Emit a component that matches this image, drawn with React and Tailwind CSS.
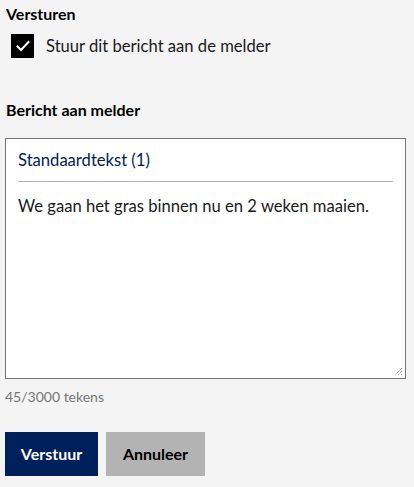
export default function App() {
  return (
    <div className="min-h-[487px] w-[414px] bg-[#f4f4f4] pl-[5px] pr-[8px] text-black" style={{ fontFamily: "Lato, 'Noto Sans', sans-serif" }}>
      <div className="pt-[4px] text-[16px] font-bold leading-[20px] pl-[1px]">Versturen</div>
      <label className="mt-[10px] flex items-center gap-[12px] pl-[6px]">
        <span className="flex h-[24px] w-[23px] items-center justify-center bg-black">
          <svg width="14" height="12" viewBox="0 0 14 12" fill="none">
            <path d="M1.5 6.5 L5 10 L12.5 2" stroke="white" strokeWidth="2" strokeLinecap="square" />
          </svg>
        </span>
        <span className="text-[16.6px] leading-[24px] text-[#1a1a1a]">Stuur dit bericht aan de melder</span>
      </label>
      <div className="mt-[42px] text-[16px] font-bold leading-[20px] pl-[1px]">Bericht aan melder</div>
      <div className="relative mt-[18px] h-[241px] w-[401px] border border-[#767676] bg-white px-[12px]">
        <div className="border-b border-[#b4b4b4] pt-[10px] pb-[10px] text-[16.6px] leading-[22px] text-[#00205b]">Standaardtekst (1)</div>
        <div className="pt-[13px] text-[16.6px] leading-[22px] text-[#1a1a1a]">We gaan het gras binnen nu en 2 weken maaien.</div>
        <svg className="absolute bottom-[2px] right-[2px]" width="9" height="9" viewBox="0 0 9 9">
          <path d="M8 1 L1 8 M8 4 L4 8 M8 7 L7 8" stroke="#555" strokeWidth="1" strokeDasharray="1 1" />
        </svg>
      </div>
      <div className="mt-[8px] text-[14px] leading-[20px] text-[#767676]">45/3000 tekens</div>
      <div className="mt-[25px] flex gap-[8px]">
        <button className="h-[44px] w-[93px] bg-[#00205b] text-[16px] font-bold text-white">Verstuur</button>
        <button className="h-[44px] w-[99px] bg-[#b3b3b3] text-[16px] font-bold text-black">Annuleer</button>
      </div>
    </div>
  );
}
